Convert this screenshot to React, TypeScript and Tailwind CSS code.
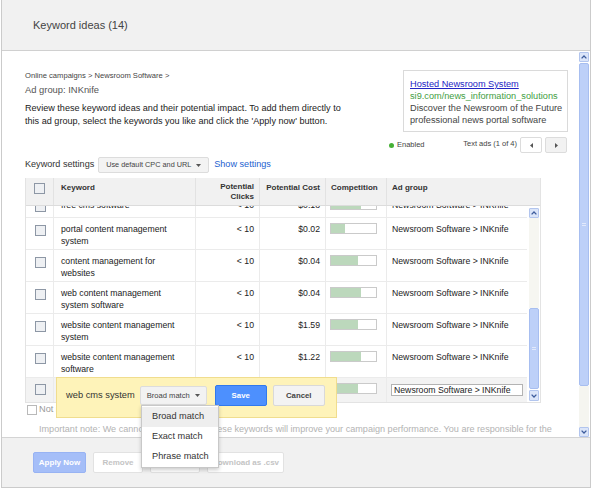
import React from 'react';

type KeywordRow = {
  kw: string;
  clicks: string;
  cost: string;
  fill: number;
  tall: boolean;
};

const rows: KeywordRow[] = [
  { kw: 'free cms software', clicks: '< 10', cost: '$0.18', fill: 30, tall: false },
  { kw: 'portal content management system', clicks: '< 10', cost: '$0.02', fill: 14, tall: true },
  { kw: 'content management for websites', clicks: '< 10', cost: '$0.04', fill: 27, tall: true },
  { kw: 'web content management system software', clicks: '< 10', cost: '$0.04', fill: 30, tall: true },
  { kw: 'website content management system', clicks: '< 10', cost: '$1.59', fill: 27, tall: true },
  { kw: 'website content management software', clicks: '< 10', cost: '$1.22', fill: 30, tall: true },
];

function Check({ className = '' }: { className?: string }) {
  return <span className={`block h-[11px] w-[11px] border border-[#8d97a5] bg-[#eef0f3] ${className}`} />;
}

function Caret() {
  return (
    <svg width="5" height="3" viewBox="0 0 5 3" className="shrink-0">
      <polygon points="0,0 5,0 2.5,3" fill="#555" />
    </svg>
  );
}

function ScrollArrow({ up, className = '' }: { up?: boolean; className?: string }) {
  return (
    <div className={`flex items-center justify-center rounded-[1px] border border-[#b2c5ee] bg-[#dbe5f9] ${className}`}>
      <svg width="6" height="4" viewBox="0 0 6 4">
        <polyline
          points={up ? '0.6,3.4 3,1 5.4,3.4' : '0.6,0.6 3,3 5.4,0.6'}
          fill="none"
          stroke="#3d5c9c"
          strokeWidth="1.3"
        />
      </svg>
    </div>
  );
}

function Thumb({ className = '' }: { className?: string }) {
  return (
    <div className={`flex items-center justify-center rounded-[2px] border border-[#a7bef0] bg-[#bdd0f8] ${className}`}>
      <span className="flex flex-col gap-[1px]">
        <i className="block h-px w-[4px] bg-[#e2e9fb]" />
        <i className="block h-px w-[4px] bg-[#e2e9fb]" />
      </span>
    </div>
  );
}

function Bar({ fill }: { fill: number }) {
  return (
    <div className="h-[11px] w-[47px] border border-[#cacaca] bg-white">
      <div className="h-full bg-[#bcd8bc]" style={{ width: fill }} />
    </div>
  );
}

function Row({ r }: { r: KeywordRow }) {
  return (
    <div className={`flex border-b border-[#ebebeb] ${r.tall ? 'h-[32px]' : 'h-[24px]'}`}>
      <div className="w-[28px] border-r border-[#ebebeb] pt-[7px] pl-[9px]">
        <Check />
      </div>
      <div className="w-[142px] border-r border-[#ebebeb] pt-[5px] pr-[14px] pl-[7px]">{r.kw}</div>
      <div className="w-[64px] border-r border-[#ebebeb] pt-[5px] pr-[5px] text-right">{r.clicks}</div>
      <div className="w-[66px] border-r border-[#ebebeb] pt-[5px] pr-[5px] text-right">{r.cost}</div>
      <div className="w-[61px] border-r border-[#ebebeb] pt-[5px] pl-[4px]">
        <Bar fill={r.fill} />
      </div>
      <div className="w-[140px] pt-[5px] pl-[5px]">Newsroom Software &gt; INKnife</div>
    </div>
  );
}

function KeywordTable() {
  return (
    <div className="ml-[23px] mt-[5px] w-[516px] border-x border-b border-[#e3e3e3]">
      <div className="flex h-[28px] border-b border-[#dcdcdc] bg-[#f1f1f1] text-[8px] font-bold leading-[10px] text-[#333]">
        <div className="w-[28px] border-r border-[#e2e2e2] pt-[5px] pl-[8px]">
          <Check />
        </div>
        <div className="w-[142px] border-r border-[#e2e2e2] pt-[5px] pl-[7px]">Keyword</div>
        <div className="w-[64px] border-r border-[#e2e2e2] pt-[4px] pr-[5px] text-right">
          Potential
          <br />
          Clicks
        </div>
        <div className="w-[66px] border-r border-[#e2e2e2] pt-[5px] pr-[5px] text-right">Potential Cost</div>
        <div className="w-[61px] border-r border-[#e2e2e2] pt-[5px] pl-[5px]">Competition</div>
        <div className="w-[140px] pt-[5px] pl-[5px]">Ad group</div>
      </div>
      <div className="flex h-[196px] overflow-hidden">
        <div className="w-[501px] text-[8.7px] leading-[12px] text-[#222]">
          <div className="-mt-[12px]">
            {rows.map((r) => (
              <Row key={r.kw} r={r} />
            ))}
            <div className="flex h-[24px] bg-[#f3f3f3]">
              <div className="w-[28px] border-r border-[#ebebeb] pt-[6px] pl-[9px]">
                <Check />
              </div>
              <div className="w-[142px] border-r border-[#ebebeb]" />
              <div className="w-[64px] border-r border-[#ebebeb]" />
              <div className="w-[66px] border-r border-[#ebebeb]" />
              <div className="w-[61px] border-r border-[#ebebeb] pt-[5px] pl-[4px]">
                <Bar fill={27} />
              </div>
              <div className="w-[140px] pt-[6px] pl-[4px]">
                <div className="h-[12px] w-[132px] border border-[#b3b3b3] bg-white pl-[2px] leading-[10px]">
                  Newsroom Software &gt; INKnife
                </div>
              </div>
            </div>
          </div>
        </div>
        <div className="ml-[2px] flex w-[10px] flex-col pt-[2px]">
          <ScrollArrow up className="h-[10px]" />
          <div className="h-[90px] bg-[#f6f6f1]" />
          <Thumb className="h-[81px]" />
          <ScrollArrow className="mt-[1px] h-[11px]" />
        </div>
      </div>
    </div>
  );
}

export default function App() {
  return (
    <div className="relative h-[490px] w-[592px] overflow-hidden bg-white font-['Liberation_Sans',Arial,sans-serif]">
      <div className="ml-[1px] w-[590px] border-x border-b border-[#cbcbcb]">
        <div className="flex h-[51px] items-center border-b border-[#d0d0d0] bg-[#f1f1f1] pl-[31px] text-[11px] text-[#444]">
          Keyword ideas (14)
        </div>

        <div className="flex h-[386px]">
          <div className="w-[576px] overflow-hidden">
            <div className="flex justify-between pt-[19px] pr-[10px] pl-[23px]">
              <div className="pt-[1px]">
                <div className="text-[7.6px] leading-[10px] text-[#444]">Online campaigns &gt; Newsroom Software &gt;</div>
                <div className="mt-[3px] text-[9.4px] leading-[12px] text-[#555]">Ad group: INKnife</div>
                <p className="mt-[6px] whitespace-nowrap text-[9.1px] leading-[13px] text-[#222]">
                  Review these keyword ideas and their potential impact. To add them directly to
                  <br />
                  this ad group, select the keywords you like and click the 'Apply now' button.
                </p>
              </div>
              <div className="flex flex-col items-end">
                <div className="w-[165px] border border-[#dadada] px-[6px] pt-[7px] pb-[5px] text-[9.2px] leading-[12px] whitespace-nowrap">
                  <div className="text-[#2424c4] underline">Hosted Newsroom System</div>
                  <div className="text-[#3f9e3f]">si9.com/news_information_solutions</div>
                  <div className="text-[#444]">Discover the Newsroom of the Future</div>
                  <div className="text-[#444]">professional news portal software</div>
                </div>
                <div className="mt-[5px] flex h-[16px] w-[179px] items-center justify-between pr-[1px] text-[7.5px] text-[#444]">
                  <div className="flex items-center gap-[3px]">
                    <span className="block h-[5px] w-[5px] rounded-full bg-[#45b035]" />
                    <span>Enabled</span>
                  </div>
                  <div className="flex items-center">
                    <span className="mr-[3px] -mt-[3px]">Text ads (1 of 4)</span>
                    <span className="flex h-[16px] w-[22px] items-center justify-center rounded-[2px] border border-[#dcdcdc] bg-white">
                      <svg width="3" height="5" viewBox="0 0 3 5">
                        <polygon points="3,0 3,5 0,2.5" fill="#555" />
                      </svg>
                    </span>
                    <span className="ml-[3px] flex h-[16px] w-[22px] items-center justify-center rounded-[2px] border border-[#dcdcdc] bg-[#f2f2f2]">
                      <svg width="3" height="5" viewBox="0 0 3 5">
                        <polygon points="0,0 0,5 3,2.5" fill="#555" />
                      </svg>
                    </span>
                  </div>
                </div>
              </div>
            </div>

            <div className="mt-[4px] flex h-[16px] items-center pl-[23px] text-[9.1px]">
              <span className="text-[#333]">Keyword settings</span>
              <span className="ml-[4px] flex h-[16px] w-[111px] items-center justify-center gap-[5px] rounded-[2px] border border-[#dcdcdc] bg-[#f3f3f3] text-[7.3px] text-[#444]">
                Use default CPC and URL
                <Caret />
              </span>
              <span className="ml-[5px] text-[#1d5fd0]">Show settings</span>
            </div>

            <KeywordTable />

            <div className="mt-[2px] flex h-[10px] items-center pl-[25px] text-[9.2px] text-[#9a9a9a]">
              <span className="block h-[10px] w-[10px] border border-[#b9b9b9] bg-white" />
              <span className="ml-[2px]">Not in any ad group</span>
            </div>
            <p className="mt-[8px] w-[566px] pl-[37px] text-[9.1px] leading-[12px] text-[#b3b3b3]">
              Important note: We cannot guarantee that these keywords will improve your campaign performance. You are responsible for the keywords you select and for ensuring that your use of the keywords does not violate any applicable laws.
            </p>
          </div>

          <div className="flex w-[12px] flex-col px-[1px] pt-[1px]">
            <ScrollArrow up className="h-[10px]" />
            <Thumb className="mt-[1px] h-[323px]" />
            <div className="h-[41px] bg-[#f5f5f0]" />
            <ScrollArrow className="h-[10px]" />
          </div>
        </div>

        <div className="flex h-[50px] items-start gap-[7px] border-t border-[#d4d4d4] bg-[#f1f1f1] pt-[14px] pl-[31px] text-[8px] font-bold">
          <span className="flex h-[21px] w-[53px] items-center justify-center rounded-[2px] border border-[#98b3f3] bg-[#a5bef8] text-white">
            Apply Now
          </span>
          <span className="flex h-[21px] w-[50px] items-center justify-center rounded-[2px] border border-[#e2e2e2] bg-white text-[#c4c4c4]">
            Remove
          </span>
          <span className="flex h-[21px] w-[50px] items-center justify-center rounded-[2px] border border-[#e2e2e2] bg-white text-[#c4c4c4]">
            Add all
          </span>
          <span className="flex h-[21px] w-[77px] items-center justify-center rounded-[2px] border border-[#e2e2e2] bg-white text-[#c4c4c4]">
            Download as .csv
          </span>
        </div>
      </div>

      {/* inline editor over the last row */}
      <div className="absolute top-[377px] left-[56px] flex h-[41px] w-[281px] items-start border border-[#f0dd8e] bg-[#fef3b9] pt-[7px] pl-[9px]">
        <span className="mt-[4px] text-[9.3px] leading-[12px] text-[#333]">web cms system</span>
        <span className="mt-[1px] ml-[5px] flex h-[19px] w-[67px] items-center justify-center gap-[5px] rounded-[2px] border border-[#dcdcdc] bg-[#f2f2f2] text-[7.6px] text-[#444]">
          Broad match
          <Caret />
        </span>
        <span className="ml-[8px] flex h-[21px] w-[52px] items-center justify-center rounded-[2px] border border-[#3079ed] bg-[#4d90fe] text-[7.8px] font-bold text-white">
          Save
        </span>
        <span className="ml-[6px] flex h-[21px] w-[52px] items-center justify-center rounded-[2px] border border-[#d9d9d9] bg-[#f3f3f3] text-[7.8px] font-bold text-[#444]">
          Cancel
        </span>
      </div>

      {/* match type menu */}
      <div className="absolute top-[405px] left-[141px] w-[78px] border border-[#c8c8c8] bg-white pt-[1px] text-[9.2px] text-[#333] shadow-[0_2px_4px_rgba(0,0,0,0.2)]">
        <div className="flex h-[20px] items-center bg-[#eeeeee] pl-[10px]">Broad match</div>
        <div className="flex h-[20px] items-center pl-[10px]">Exact match</div>
        <div className="flex h-[20px] items-center pl-[10px]">Phrase match</div>
      </div>
    </div>
  );
}
